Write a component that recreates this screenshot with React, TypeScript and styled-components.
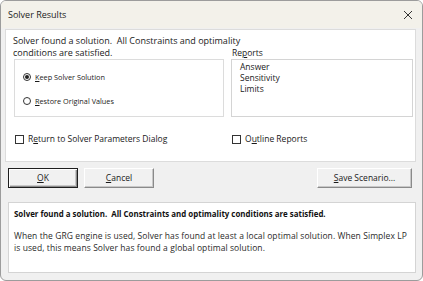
import * as React from 'react';
import styled, { createGlobalStyle, css } from 'styled-components';

const GlobalStyle = createGlobalStyle`
  html, body {
    margin: 0;
    padding: 0;
    background: #ffffff;
  }
  body {
    font-family: "Open Sans", "Noto Sans", "Liberation Sans", sans-serif;
    font-size: 9px;
    color: #1a1a1a;
  }
`;

const Window = styled.div`
  width: 423px;
  height: 281px;
  box-sizing: border-box;
  border: 1px solid #9c9c9c;
  border-radius: 6px;
  background: #f0f0f0;
  display: flex;
  flex-direction: column;
  overflow: hidden;
`;

const TitleBar = styled.div`
  height: 27px;
  flex: none;
  display: flex;
  align-items: center;
  justify-content: space-between;
  padding: 0 6px 0 7px;
  background: #f3f1ea;
  font-size: 9px;
  color: #222;
`;

const CloseGlyph = styled.svg`
  width: 10px;
  height: 10px;
  margin-right: 3px;
`;

const Body = styled.div`
  flex: 1;
  display: flex;
  flex-direction: column;
  padding: 1px 6px 6px 4px;
`;

const TopPanel = styled.div`
  height: 133px;
  box-sizing: border-box;
  background: #ffffff;
  border: 1px solid #dcdcdc;
  padding: 5px 4px 0 7px;
`;

const MessageLine = styled.div`
  line-height: 12px;
  height: 12px;
  white-space: nowrap;
`;

const Columns = styled.div`
  display: grid;
  grid-template-columns: 210px 182px;
  column-gap: 7px;
  margin-top: -12px;
  margin-left: 1px;
`;

const Column = styled.div`
  display: flex;
  flex-direction: column;
`;

const GroupBox = styled.div`
  height: 58px;
  box-sizing: border-box;
  border: 1px solid #dcdcdc;
  display: flex;
  flex-direction: column;
  gap: 14px;
  padding: 12px 0 0 8px;
  margin-top: 12px;
`;

const ListLabel = styled.div`
  height: 12px;
  line-height: 12px;
  padding-left: 1px;
  font-size: 8.5px;
`;

const ListBox = styled.div`
  height: 58px;
  box-sizing: border-box;
  border: 1px solid #d4d4d4;
  padding: 1px 0 0 8px;
  font-size: 8.5px;
  line-height: 11px;
`;

const ListItem = styled.div`
  height: 11px;
`;

const Option = styled.label`
  display: flex;
  align-items: center;
  gap: 4px;
  font-size: 7.3px;
  line-height: 10px;
`;

const Radio = styled.span<{ checked?: boolean }>`
  width: 8px;
  height: 8px;
  box-sizing: border-box;
  border: 1px solid #333;
  border-radius: 50%;
  display: flex;
  align-items: center;
  justify-content: center;
  ${({ checked }) =>
    checked &&
    css`
      &::after {
        content: '';
        width: 4px;
        height: 4px;
        border-radius: 50%;
        background: #222;
      }
    `}
`;

const CheckRow = styled.div`
  display: grid;
  grid-template-columns: 217px 1fr;
  margin-top: 16px;
  margin-left: 2px;
`;

const Check = styled.label`
  display: flex;
  align-items: center;
  gap: 4px;
  font-size: 8.5px;
  line-height: 12px;
`;

const CheckBox = styled.span`
  width: 9px;
  height: 9px;
  box-sizing: border-box;
  border: 1px solid #333;
  background: #fff;
`;

const ButtonRow = styled.div`
  display: flex;
  align-items: center;
  gap: 6px;
  margin-top: 5px;
  padding-left: 3px;
  padding-right: 4px;
  height: 21px;
`;

const Button = styled.button<{ primary?: boolean; width: number }>`
  width: ${({ width }) => width}px;
  height: 20px;
  box-sizing: border-box;
  font-family: inherit;
  font-size: 8.5px;
  color: #1a1a1a;
  background: #f1f1f1;
  border: 1px solid;
  border-color: #ffffff #8a8a8a #8a8a8a #ffffff;
  box-shadow: inset -1px -1px 0 #c8c8c8;
  padding: 0;
  ${({ primary }) =>
    primary &&
    css`
      border: 1px solid #1e1e1e;
      box-shadow: inset 1px 1px 0 #ffffff, inset -1px -1px 0 #8a8a8a, inset -2px -2px 0 #c8c8c8;
    `}
`;

const Spacer = styled.div`
  flex: 1;
`;

const InfoPanel = styled.div`
  margin-top: 14px;
  margin-left: 3px;
  height: 71px;
  box-sizing: border-box;
  background: #ffffff;
  border: 1px solid #d4d4d4;
  padding: 5px 3px 0 5px;
  font-size: 8.5px;
  line-height: 12px;
  color: #2a2a2a;
`;

const InfoTitle = styled.div`
  font-weight: 700;
  font-size: 7.9px;
  color: #111;
  margin-bottom: 10px;
`;

const InfoText = styled.div`
  letter-spacing: 0.08px;
`;

const Key = styled.span`
  text-decoration: underline;
  text-underline-offset: 1px;
`;

export default function App() {
  return (
    <>
      <GlobalStyle />
      <Window>
        <TitleBar>
          <span>Solver Results</span>
          <CloseGlyph viewBox="0 0 10 10">
            <path d="M1 1 L9 9 M9 1 L1 9" stroke="#333" strokeWidth="1" fill="none" />
          </CloseGlyph>
        </TitleBar>
        <Body>
          <TopPanel>
            <MessageLine>Solver found a solution.&nbsp; All Constraints and optimality</MessageLine>
            <MessageLine>conditions are satisfied.</MessageLine>
            <Columns>
              <Column>
                <GroupBox>
                  <Option>
                    <Radio checked />
                    <span>
                      <Key>K</Key>eep Solver Solution
                    </span>
                  </Option>
                  <Option>
                    <Radio />
                    <span>
                      <Key>R</Key>estore Original Values
                    </span>
                  </Option>
                </GroupBox>
              </Column>
              <Column>
                <ListLabel>
                  Re<Key>p</Key>orts
                </ListLabel>
                <ListBox>
                  <ListItem>Answer</ListItem>
                  <ListItem>Sensitivity</ListItem>
                  <ListItem>Limits</ListItem>
                </ListBox>
              </Column>
            </Columns>
            <CheckRow>
              <Check>
                <CheckBox />
                <span>
                  R<Key>e</Key>turn to Solver Parameters Dialog
                </span>
              </Check>
              <Check>
                <CheckBox />
                <span>
                  O<Key>u</Key>tline Reports
                </span>
              </Check>
            </CheckRow>
          </TopPanel>
          <ButtonRow>
            <Button primary width={70}>
              <Key>O</Key>K
            </Button>
            <Button width={70}>
              <Key>C</Key>ancel
            </Button>
            <Spacer />
            <Button width={95}>
              <Key>S</Key>ave Scenario...
            </Button>
          </ButtonRow>
          <InfoPanel>
            <InfoTitle>Solver found a solution.&nbsp; All Constraints and optimality conditions are satisfied.</InfoTitle>
            <InfoText>
              When the GRG engine is used, Solver has found at least a local optimal solution. When Simplex LP is used,
              this means Solver has found a global optimal solution.
            </InfoText>
          </InfoPanel>
        </Body>
      </Window>
    </>
  );
}
